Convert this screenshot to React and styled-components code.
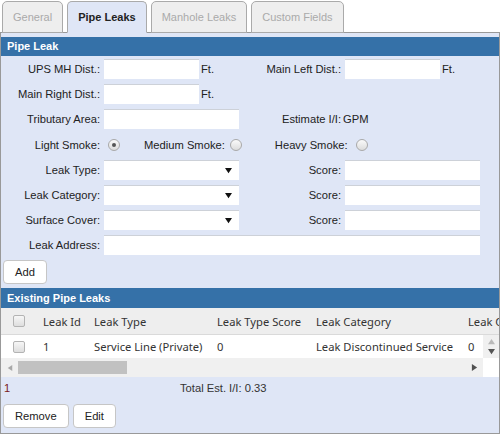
import React from 'react';
import styled, { createGlobalStyle } from 'styled-components';

const GlobalStyle = createGlobalStyle`
    html, body {
        margin: 0;
        padding: 0;
        background: #ffffff;
    }
    body {
        font-family: 'Liberation Sans', Arial, sans-serif;
        font-size: 11.2px;
        color: #222;
    }
    * {
        box-sizing: border-box;
    }
`;

const tabs = [
    { label: 'General', active: false },
    { label: 'Pipe Leaks', active: true },
    { label: 'Manhole Leaks', active: false },
    { label: 'Custom Fields', active: false },
];

const columns = [
    { key: 'id', title: 'Leak Id', width: 51 },
    { key: 'type', title: 'Leak Type', width: 123 },
    { key: 'score', title: 'Leak Type Score', width: 99 },
    { key: 'category', title: 'Leak Category', width: 152 },
    { key: 'categoryScore', title: 'Leak Category Score', width: 130 },
];

const leaks = [
    {
        id: '1',
        type: 'Service Line (Private)',
        score: '0',
        category: 'Leak Discontinued Service',
        categoryScore: '0',
    },
];

const gridCols = `36px ${columns.map((c) => c.width + 'px').join(' ')}`;

const Arrow = ({ dir = 'down', color = '#111', size = 7 }) => {
    const pts = {
        down: '0,1 8,1 4,7',
        up: '0,7 8,7 4,1',
        left: '7,0 7,8 1,4',
        right: '1,0 1,8 7,4',
    };
    return (
        <svg width={size} height={size} viewBox='0 0 8 8'>
            <polygon points={pts[dir]} fill={color} />
        </svg>
    );
};

const App = () => {
    return (
        <>
            <GlobalStyle />
            <Page>
                <TabBar>
                    {tabs.map((t) => (
                        <Tab key={t.label} $active={t.active}>
                            {t.label}
                        </Tab>
                    ))}
                </TabBar>

                <Panel>
                    <SectionHeader>Pipe Leak</SectionHeader>
                    <Form>
                        <FieldRow>
                            <Label>UPS MH Dist.:</Label>
                            <FieldCell>
                                <TextInput $width={95} />
                                <Unit>Ft.</Unit>
                            </FieldCell>
                            <Label>Main Left Dist.:</Label>
                            <FieldCell>
                                <TextInput $width={95} />
                                <Unit>Ft.</Unit>
                            </FieldCell>
                        </FieldRow>
                        <FieldRow>
                            <Label>Main Right Dist.:</Label>
                            <FieldCell>
                                <TextInput $width={95} />
                                <Unit>Ft.</Unit>
                            </FieldCell>
                        </FieldRow>
                        <FieldRow>
                            <Label>Tributary Area:</Label>
                            <FieldCell>
                                <TextInput />
                            </FieldCell>
                            <Label>Estimate I/I:</Label>
                            <FieldCell>
                                <Plain>GPM</Plain>
                            </FieldCell>
                        </FieldRow>
                        <RadioRow>
                            <RadioLabel $width={99}>Light Smoke:</RadioLabel>
                            <Radio $checked $gap={8} />
                            <RadioLabel $offset={24}>Medium Smoke:</RadioLabel>
                            <Radio $gap={5} />
                            <RadioLabel $offset={33}>Heavy Smoke:</RadioLabel>
                            <Radio $gap={8} />
                        </RadioRow>
                        <FieldRow>
                            <Label>Leak Type:</Label>
                            <SelectBox>
                                <Arrow />
                            </SelectBox>
                            <Label>Score:</Label>
                            <TextInput />
                        </FieldRow>
                        <FieldRow>
                            <Label>Leak Category:</Label>
                            <SelectBox>
                                <Arrow />
                            </SelectBox>
                            <Label>Score:</Label>
                            <TextInput />
                        </FieldRow>
                        <FieldRow>
                            <Label>Surface Cover:</Label>
                            <SelectBox>
                                <Arrow />
                            </SelectBox>
                            <Label>Score:</Label>
                            <TextInput />
                        </FieldRow>
                        <FieldRow>
                            <Label>Leak Address:</Label>
                            <WideInput />
                        </FieldRow>
                        <ButtonRow>
                            <Button>Add</Button>
                        </ButtonRow>
                    </Form>

                    <SectionHeader $tall>Existing Pipe Leaks</SectionHeader>
                    <Table>
                        <HeadRow>
                            <CheckCell>
                                <Checkbox />
                            </CheckCell>
                            {columns.map((c) => (
                                <Cell key={c.key}>{c.title}</Cell>
                            ))}
                        </HeadRow>
                        <BodyArea>
                            <BodyRows>
                                {leaks.map((l) => (
                                    <BodyRow key={l.id}>
                                        <CheckCell>
                                            <Checkbox />
                                        </CheckCell>
                                        {columns.map((c) => (
                                            <Cell key={c.key}>{l[c.key]}</Cell>
                                        ))}
                                    </BodyRow>
                                ))}
                            </BodyRows>
                            <VScroll>
                                <Arrow dir='up' color='#b9b9b9' size={7} />
                                <Arrow dir='down' color='#555' size={7} />
                            </VScroll>
                        </BodyArea>
                        <HScrollRow>
                            <HScroll>
                                <Arrow dir='left' color='#a8a8a8' size={6} />
                                <Thumb />
                                <Spacer />
                                <Arrow dir='right' color='#505050' size={7} />
                            </HScroll>
                            <Corner />
                        </HScrollRow>
                    </Table>

                    <Footer>
                        <Count>1</Count>
                        <Total>Total Est. I/I: 0.33</Total>
                    </Footer>
                    <ButtonRow $top={6}>
                        <Button>Remove</Button>
                        <Button>Edit</Button>
                    </ButtonRow>
                </Panel>
            </Page>
        </>
    );
};

export default App;

export const Page = styled.div`
    width: 500px;
    height: 434px;
    display: flex;
    flex-direction: column;
    overflow: hidden;
`;

export const TabBar = styled.div`
    display: flex;
    align-items: flex-end;
    gap: 4px;
    height: 33px;
    padding: 1px 0 0 2px;
    margin-bottom: -1px;
`;

export const Tab = styled.div`
    height: 32px;
    display: flex;
    align-items: center;
    padding: 0 10px;
    font-size: 11px;
    font-weight: ${(p) => (p.$active ? 700 : 400)};
    color: ${(p) => (p.$active ? '#222' : '#aaa')};
    background: ${(p) => (p.$active ? '#dfe6f6' : '#eeeeee')};
    border: 1px solid #aaa;
    border-bottom: ${(p) => (p.$active ? '1px solid #dfe6f6' : '1px solid #aaa')};
    border-radius: 5px 5px 0 0;
    position: relative;
    z-index: ${(p) => (p.$active ? 2 : 1)};
`;

export const Panel = styled.div`
    height: 402px;
    border: 1px solid #999;
    background: #dfe6f6;
    padding-top: 4px;
    display: flex;
    flex-direction: column;
`;

export const SectionHeader = styled.div`
    height: ${(p) => (p.$tall ? 20 : 19)}px;
    line-height: ${(p) => (p.$tall ? 20 : 19)}px;
    background: #3571a8;
    color: #fff;
    font-size: 11px;
    font-weight: 700;
    padding-left: 6px;
`;

export const Form = styled.div`
    display: flex;
    flex-direction: column;
    gap: 5px;
    padding: 3px 0 4px 0;
`;

export const FieldRow = styled.div`
    display: grid;
    grid-template-columns: 99px 136px 97px 136px;
    column-gap: 4px;
    align-items: center;
    height: 20px;
`;

export const Label = styled.div`
    text-align: right;
    white-space: nowrap;
    color: #222;
`;

export const FieldCell = styled.div`
    display: flex;
    align-items: center;
`;

export const TextInput = styled.div`
    width: ${(p) => (p.$width ? p.$width + 'px' : '135px')};
    height: 20px;
    background: #fff;
    border-top: 1px solid #cdd1d8;
`;

export const WideInput = styled(TextInput)`
    grid-column: 2 / span 3;
    width: 376px;
`;

export const SelectBox = styled.div`
    width: 135px;
    height: 20px;
    background: #fff;
    border-top: 1px solid #cdd1d8;
    display: flex;
    align-items: center;
    justify-content: flex-end;
    padding-right: 7px;
`;

export const Unit = styled.span`
    margin-left: 2px;
`;

export const Plain = styled.span`
    margin-left: -2px;
`;

export const RadioRow = styled.div`
    display: flex;
    align-items: center;
    height: 21px;
`;

export const RadioLabel = styled.div`
    width: ${(p) => (p.$width ? p.$width + 'px' : 'auto')};
    margin-left: ${(p) => p.$offset || 0}px;
    text-align: right;
    white-space: nowrap;
`;

export const Radio = styled.span`
    width: 12px;
    height: 12px;
    margin-left: ${(p) => p.$gap}px;
    border-radius: 50%;
    border: 1px solid #a9a9a9;
    background: linear-gradient(#fafafa, #dcdcdc);
    display: flex;
    align-items: center;
    justify-content: center;
    &::after {
        content: '';
        width: 4px;
        height: 4px;
        border-radius: 50%;
        background: ${(p) => (p.$checked ? '#555' : 'transparent')};
    }
`;

export const ButtonRow = styled.div`
    display: flex;
    gap: 4px;
    padding-left: 2px;
    margin-top: ${(p) => p.$top || 0}px;
`;

export const Button = styled.div`
    height: 24px;
    padding: 0 11px;
    display: flex;
    align-items: center;
    background: #fff;
    border: 1px solid #c6c6c6;
    border-radius: 4px;
    color: #222;
`;

export const Table = styled.div`
    display: flex;
    flex-direction: column;
    font-family: 'Noto Sans', 'Open Sans', sans-serif;
    font-size: 11.2px;
    color: #333;
`;

export const HeadRow = styled.div`
    display: grid;
    grid-template-columns: ${gridCols};
    height: 27px;
    align-items: center;
    background: #eeeeee;
    border-bottom: 1px solid #dadada;
    overflow: hidden;
    white-space: nowrap;
`;

export const BodyArea = styled.div`
    display: flex;
    height: 23px;
`;

export const BodyRows = styled.div`
    flex: 1;
    overflow: hidden;
    background: #fff;
`;

export const BodyRow = styled.div`
    display: grid;
    grid-template-columns: ${gridCols};
    height: 23px;
    align-items: center;
    white-space: nowrap;
`;

export const CheckCell = styled.div`
    padding-left: 12px;
    display: flex;
    align-items: center;
`;

export const Cell = styled.div`
    padding-left: 6px;
    overflow: hidden;
`;

export const Checkbox = styled.span`
    width: 12px;
    height: 12px;
    border: 1px solid #b3b3b3;
    border-radius: 2px;
    background: linear-gradient(#f7f7f7, #dedede);
`;

export const VScroll = styled.div`
    width: 16px;
    background: #f0f0f0;
    display: flex;
    flex-direction: column;
    align-items: center;
    justify-content: center;
    gap: 3px;
`;

export const HScrollRow = styled.div`
    display: flex;
    height: 19px;
`;

export const HScroll = styled.div`
    flex: 1;
    background: #f0f0f0;
    display: flex;
    align-items: center;
    padding: 0 5px 0 6px;
`;

export const Thumb = styled.div`
    width: 109px;
    height: 13px;
    margin-left: 5px;
    background: #c1c1c1;
`;

export const Spacer = styled.div`
    flex: 1;
`;

export const Corner = styled.div`
    width: 16px;
    background: #fff;
`;

export const Footer = styled.div`
    display: grid;
    grid-template-columns: 176px auto;
    height: 21px;
    align-items: center;
    padding-left: 3px;
`;

export const Count = styled.span`
    color: #7a1a1a;
`;

export const Total = styled.span`
    color: #333;
`;
